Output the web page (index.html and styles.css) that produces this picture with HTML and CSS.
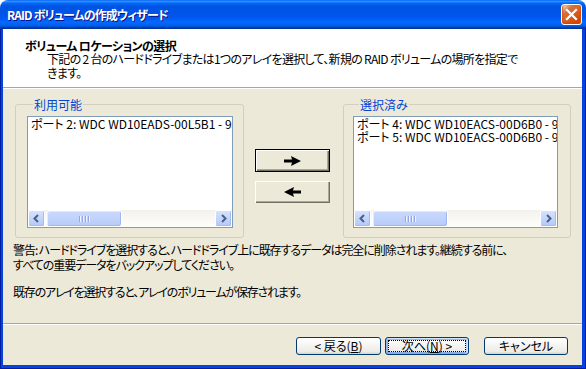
FILE: index.html
```html
<!doctype html>
<html>
<head>
    <meta charset="UTF-8">
    <title>RAID ボリュームの作成ウィザード</title>
    <link rel="stylesheet" href="styles.css">
</head>
<body>
<div class="window">
    <div class="titlebar">
        <span class="title">RAID ボリュームの作成ウィザード</span>
        <span class="close"><svg width="19" height="19" viewBox="0 0 19 19"><path d="M5 5 L14 14 M14 5 L5 14" stroke="#fff" stroke-width="2.2" stroke-linecap="square"/></svg></span>
    </div>
    <div class="frame">
        <div class="client">
            <div class="hd">
                <h1>ボリューム ロケーションの選択</h1>
                <p>下記の 2 台のハードドライブまたは1つのアレイを選択して、新規の RAID ボリュームの場所を指定できます。</p>
            </div>
            <div class="bd">
                <div class="lists">
                    <fieldset class="group">
                        <legend>利用可能</legend>
                        <div class="listbox">
                            <ul>
                                <li>ポート 2: WDC WD10EADS-00L5B1 - 931.5 GB</li>
                            </ul>
                            <div class="hscroll">
                                <span class="sb-btn"><svg width="9" height="9" viewBox="0 0 9 9"><path d="M6 1 L2.5 4.5 L6 8" fill="none" stroke="#4d6185" stroke-width="2"/></svg></span>
                                <span class="sb-thumb"><i></i><i></i><i></i><i></i></span>
                                <span class="sb-btn"><svg width="9" height="9" viewBox="0 0 9 9"><path d="M3 1 L6.5 4.5 L3 8" fill="none" stroke="#4d6185" stroke-width="2"/></svg></span>
                            </div>
                        </div>
                    </fieldset>
                    <div class="movers">
                        <button class="mv is-default"><svg width="17" height="10" viewBox="0 0 17 10"><polygon points="0,3.5 8,3.5 7,0 17,5 7,10 8,6.5 0,6.5" fill="#000"/></svg></button>
                        <button class="mv"><svg width="17" height="10" viewBox="0 0 17 10"><polygon points="17,3.5 9,3.5 10,0 0,5 10,10 9,6.5 17,6.5" fill="#000"/></svg></button>
                    </div>
                    <fieldset class="group group-r">
                        <legend>選択済み</legend>
                        <div class="listbox">
                            <ul>
                                <li>ポート 4: WDC WD10EACS-00D6B0 - 931.5 GB</li>
                                <li>ポート 5: WDC WD10EACS-00D6B0 - 931.5 GB</li>
                            </ul>
                            <div class="hscroll">
                                <span class="sb-btn"><svg width="9" height="9" viewBox="0 0 9 9"><path d="M6 1 L2.5 4.5 L6 8" fill="none" stroke="#4d6185" stroke-width="2"/></svg></span>
                                <span class="sb-thumb"><i></i><i></i><i></i><i></i></span>
                                <span class="sb-btn"><svg width="9" height="9" viewBox="0 0 9 9"><path d="M3 1 L6.5 4.5 L3 8" fill="none" stroke="#4d6185" stroke-width="2"/></svg></span>
                            </div>
                        </div>
                    </fieldset>
                </div>
                <p class="warn">警告: ハードドライブを選択すると、ハードドライブ上に既存するデータは完全に削除されます。継続する前に、すべての重要データをバックアップしてください。</p>
                <p class="note">既存のアレイを選択すると、アレイのボリュームが保存されます。</p>
            </div>
            <div class="ft">
                <button class="btn">&lt; 戻る(<u>B</u>)</button>
                <button class="btn is-default">次へ(<u>N</u>) &gt;</button>
                <button class="btn btn-cancel">キャンセル</button>
            </div>
        </div>
    </div>
</div>
</body>
</html>
```

FILE: styles.css
```css
html, body, h1, p, ul, fieldset, legend { margin: 0; padding: 0; }
ul { list-style: none; }
body { background: #fff; font: 12px/13px "Noto Sans CJK JP", "Liberation Sans", sans-serif; font-feature-settings: "palt"; color: #000; }
button { font: inherit; font-feature-settings: "palt"; color: #000; padding: 0; cursor: default; }

.window { width: 586px; height: 369px; display: flex; flex-direction: column; }

/* title bar */
.titlebar { height: 29px; flex: none; display: flex; align-items: center; justify-content: space-between; padding: 0 4px 0 7px; border-radius: 8px 8px 0 0;
    background: linear-gradient(180deg, #0058ee 0%, #3593ff 4%, #288eff 6%, #127dff 8%, #036ffc 10%, #0262ee 14%, #0057e5 20%, #0054e3 24%, #0055eb 56%, #005bf5 66%, #026afe 76%, #0062ef 86%, #0052d6 92%, #0040ab 94%, #003092 100%); }
.titlebar .title { color: #fff; font-weight: bold; font-size: 12px; text-shadow: 1px 1px #0f1089; letter-spacing: -0.9px; }
.titlebar .close { width: 21px; height: 21px; box-sizing: border-box; border: 1px solid #fff; border-radius: 3px; display: flex; align-items: center; justify-content: center;
    background: radial-gradient(circle at 90% 90%, #cc4600 0%, #dc6527 55%, #cd7546 70%, #ffccb2 90%, #fff 100%); box-shadow: inset 0 -1px 2px 1px #da4600; }

/* frame */
.frame { flex: 1; display: flex; padding: 0 4px 4px 3px; background: #0842dc; box-shadow: inset 1px 0 #001ea0, inset -1px 0 #001ea0, inset 0 -1px #001ea0; }
.client { flex: 1; display: flex; flex-direction: column; background: #ece9d8; }

/* header */
.hd { height: 59px; flex: none; box-sizing: border-box; padding: 10px 0 0 22px; background: #fff; border-bottom: 1px solid #aca899; }
.hd h1 { font-size: 12px; font-weight: bold; line-height: 13px; letter-spacing: -0.6px; }
.hd p { width: 478px; margin-left: 22px; line-height: 14px; letter-spacing: -0.7px; }

/* body */
.bd { flex: 1; border-top: 1px solid #fff; padding-top: 9px; }
.lists { display: flex; padding: 0 11px 0 12px; }
.group { width: 229px; height: 140px; box-sizing: border-box; padding: 0 10px 9px 11px; border: 1px solid #d0d0bf; border-radius: 3px; min-width: 0; display: flex; flex-direction: column; }
.group-r { width: 228px; padding: 0 12px 9px 9px; }
.group legend { margin-left: 6px; padding: 0 1px; color: #0046d5; line-height: 13px; }
.listbox { flex: 1; margin-top: 5px; border: 1px solid #7f9db9; background: #fff; display: flex; flex-direction: column; overflow: hidden; }
.listbox ul { flex: 1; padding: 0 3px; }
.listbox li { white-space: nowrap; line-height: 13px; }

.hscroll { height: 17px; flex: none; display: flex; background: linear-gradient(180deg, #f3f1ec 0%, #fefefb 100%); }
.sb-btn { width: 17px; height: 17px; box-sizing: border-box; border: 1px solid #fff; border-radius: 2px; display: flex; align-items: center; justify-content: center;
    background: linear-gradient(180deg, #d5e2fd 0%, #c1d3fb 60%, #b4c8f6 100%); box-shadow: inset -1px -1px #a3bbef; }
.sb-btn:last-child { margin-left: auto; }
.sb-thumb { width: 76px; height: 17px; box-sizing: border-box; margin-left: 1px; border: 1px solid #fff; border-radius: 3px; display: flex; align-items: center; justify-content: center; gap: 1px;
    background: linear-gradient(180deg, #cad8fc 0%, #c1d3fb 50%, #b8cbf7 100%); box-shadow: inset -1px -1px #9fb5ee, inset 1px 1px #e2ebfe; }
.sb-thumb i { width: 1px; height: 6px; background: #8ea7e6; box-shadow: 1px 0 #eef3fe; margin-right: 1px; }

/* move buttons */
.movers { width: 75px; margin: 0 13px 0 11px; padding-top: 51px; display: flex; flex-direction: column; gap: 9px; }
.mv { width: 75px; height: 22px; border: 0; background: #ece9d8; display: flex; align-items: center; justify-content: center;
    box-shadow: inset 1px 1px #fff, inset -1px -1px #716f64, inset -2px -2px #aca899; }
.mv.is-default { height: 23px; border: 1px solid #000; }

/* notes */
.warn { width: 502px; margin: 4px 0 0 10px; line-height: 15px; letter-spacing: -1.05px; }
.note { margin: 12px 0 0 10px; line-height: 15px; letter-spacing: -1.2px; }

/* footer */
.ft { height: 42px; flex: none; box-sizing: border-box; border-top: 1px solid #aca899; box-shadow: inset 0 1px #fff; display: flex; justify-content: flex-end; align-items: flex-start; padding: 13px 14px 0 0; gap: 4px; }
.btn { width: 84px; height: 18px; box-sizing: border-box; border: 1px solid #003c74; border-radius: 3px; line-height: 14px;
    background: linear-gradient(180deg, #fff 0%, #ecebe6 86%, #d6d0c5 100%); }
.btn:first-child { width: 85px; }
.btn.is-default { outline: 1px dotted #000; outline-offset: -4px;
    box-shadow: inset -1px 1px #cee7ff, inset 1px 2px #98b8ea, inset -2px 0 #bcd4f6, inset 1px -1px #89ade4, inset 2px -2px #89ade4; }
.btn-cancel { margin-left: 11px; }
```
